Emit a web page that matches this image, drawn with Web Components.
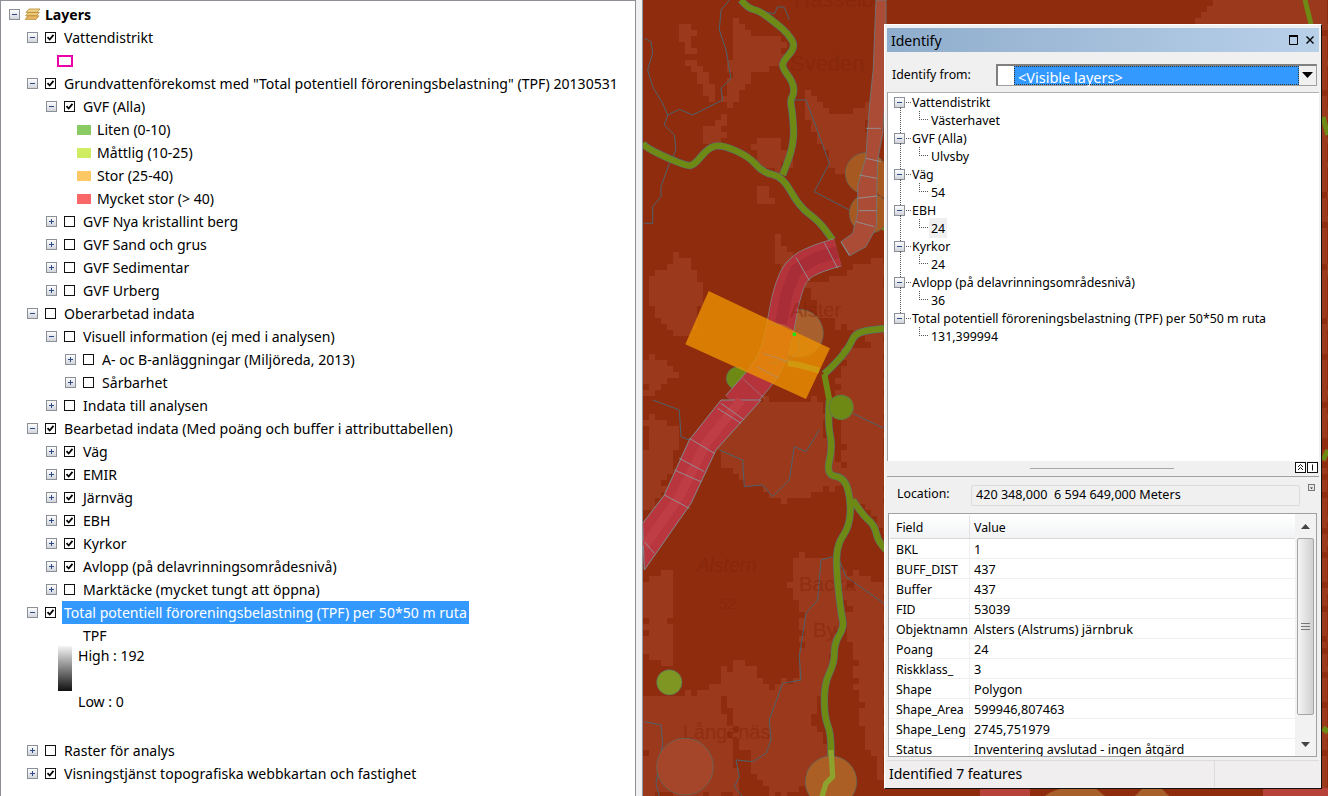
<!DOCTYPE html>
<html>
<head>
<meta charset="utf-8">
<title>Layers</title>
<style>
    html, body { margin: 0; height: 100%; overflow: hidden; background: #f0f0f0; }
    body { display: flex; width: 1328px; height: 796px; font-family: "Noto Sans", "Liberation Sans", sans-serif; color: #000; }
</style>
</head>
<body>
<layers-panel>
    <toc-row level="0" exp="minus" nocheck bold icon>Layers</toc-row>
    <toc-row level="1" exp="minus" check="on">Vattendistrikt</toc-row>
    <toc-legend level="1" kind="outline"></toc-legend>
    <toc-row level="1" exp="minus" check="on">Grundvattenförekomst med "Total potentiell föroreningsbelastning" (TPF) 20130531</toc-row>
    <toc-row level="2" exp="minus" check="on">GVF (Alla)</toc-row>
    <toc-legend level="2" color="#8acb63">Liten (0-10)</toc-legend>
    <toc-legend level="2" color="#d0ec62">Måttlig (10-25)</toc-legend>
    <toc-legend level="2" color="#fdc764">Stor (25-40)</toc-legend>
    <toc-legend level="2" color="#fa6767">Mycket stor (&gt; 40)</toc-legend>
    <toc-row level="2" exp="plus">GVF Nya kristallint berg</toc-row>
    <toc-row level="2" exp="plus">GVF Sand och grus</toc-row>
    <toc-row level="2" exp="plus">GVF Sedimentar</toc-row>
    <toc-row level="2" exp="plus">GVF Urberg</toc-row>
    <toc-row level="1" exp="minus">Oberarbetad indata</toc-row>
    <toc-row level="2" exp="minus">Visuell information (ej med i analysen)</toc-row>
    <toc-row level="3" exp="plus">A- oc B-anläggningar (Miljöreda, 2013)</toc-row>
    <toc-row level="3" exp="plus">Sårbarhet</toc-row>
    <toc-row level="2" exp="plus">Indata till analysen</toc-row>
    <toc-row level="1" exp="minus" check="on">Bearbetad indata (Med poäng och buffer i attributtabellen)</toc-row>
    <toc-row level="2" exp="plus" check="on">Väg</toc-row>
    <toc-row level="2" exp="plus" check="on">EMIR</toc-row>
    <toc-row level="2" exp="plus" check="on">Järnväg</toc-row>
    <toc-row level="2" exp="plus" check="on">EBH</toc-row>
    <toc-row level="2" exp="plus" check="on">Kyrkor</toc-row>
    <toc-row level="2" exp="plus" check="on">Avlopp (på delavrinningsområdesnivå)</toc-row>
    <toc-row level="2" exp="plus">Marktäcke (mycket tungt att öppna)</toc-row>
    <toc-row level="1" exp="minus" check="on" selected>Total potentiell föroreningsbelastning (TPF) per 50*50 m ruta</toc-row>
    <toc-ramp heading="TPF" high="High : 192" low="Low : 0"></toc-ramp>
    <toc-row level="1" exp="plus">Raster för analys</toc-row>
    <toc-row level="1" exp="plus" check="on">Visningstjänst topografiska webbkartan och fastighet</toc-row>
</layers-panel>
<map-view></map-view>
<identify-window>
    <id-node label="Vattendistrikt" value="Västerhavet"></id-node>
    <id-node label="GVF (Alla)" value="Ulvsby"></id-node>
    <id-node label="Väg" value="54"></id-node>
    <id-node label="EBH" value="24" active></id-node>
    <id-node label="Kyrkor" value="24"></id-node>
    <id-node label="Avlopp (på delavrinningsområdesnivå)" value="36"></id-node>
    <id-node label="Total potentiell föroreningsbelastning (TPF) per 50*50 m ruta" value="131,399994" last></id-node>
    <attr-row slot="rows" field="BKL" value="1"></attr-row>
    <attr-row slot="rows" field="BUFF_DIST" value="437"></attr-row>
    <attr-row slot="rows" field="Buffer" value="437"></attr-row>
    <attr-row slot="rows" field="FID" value="53039"></attr-row>
    <attr-row slot="rows" field="Objektnamn" value="Alsters (Alstrums) järnbruk"></attr-row>
    <attr-row slot="rows" field="Poang" value="24"></attr-row>
    <attr-row slot="rows" field="Riskklass_" value="3"></attr-row>
    <attr-row slot="rows" field="Shape" value="Polygon"></attr-row>
    <attr-row slot="rows" field="Shape_Area" value="599946,807463"></attr-row>
    <attr-row slot="rows" field="Shape_Leng" value="2745,751979"></attr-row>
    <attr-row slot="rows" field="Status" value="Inventering avslutad - ingen åtgärd"></attr-row>
</identify-window>

<script>
const treeBox = kind => `
    <svg width="11" height="11" viewBox="0 0 11 11" style="display:block;flex:none">
        <defs><linearGradient id="tb" x1="0" y1="0" x2="0" y2="1"><stop offset="0" stop-color="#fff"/><stop offset="1" stop-color="#cfd3da"/></linearGradient></defs>
        <rect x=".5" y=".5" width="10" height="10" fill="url(#tb)" stroke="#8b9097"/>
        <path d="M3 5.5h5" stroke="#2f4a86" fill="none"/>
        ${kind === 'plus' ? '<path d="M5.5 3v5" stroke="#2f4a86" fill="none"/>' : ''}
    </svg>`;

class TocRow extends HTMLElement {
    constructor() {
        super();
        this.attachShadow({ mode: 'open' });
    }
    connectedCallback() {
        const level = Number(this.getAttribute('level'));
        const exp = this.getAttribute('exp');
        const on = this.getAttribute('check') === 'on';
        const noCheck = this.hasAttribute('nocheck');
        const check = noCheck ? '' : `
            <svg class="chk" width="11" height="11" viewBox="0 0 11 11">
                <rect x=".5" y=".5" width="10" height="10" fill="#fff" stroke="#111"/>
                ${on ? '<path d="M2.5 5.2l2.2 2.3 3.8-4.6" fill="none" stroke="#000" stroke-width="1.8"/>' : ''}
            </svg>`;
        const icon = this.hasAttribute('icon') ? `
            <svg class="ico" width="16" height="14" viewBox="0 0 16 14">
                <path d="M4 1h11l-3 3.4H1z" fill="#f0d488" stroke="#b58a35" stroke-width=".8"/>
                <path d="M3.4 4.4h11l-3 3.4H.6z" fill="#eec777" stroke="#b58a35" stroke-width=".8"/>
                <path d="M3 7.8h11l-3 3.6H.2z" fill="#e7b764" stroke="#b58a35" stroke-width=".8"/>
            </svg>` : '';
        const indent = level === 0 ? 8 : 26 + (level - 1) * 19;
        this.shadowRoot.innerHTML = `
            <style>
                :host { display: flex; align-items: center; height: 23px; font-size: 14.08px; white-space: nowrap; }
                .chk { display: block; flex: none; margin-left: 7px; }
                .ico { display: block; flex: none; margin-left: 5px; }
                .txt { padding: 0 2px; line-height: 23px; margin-left: 6px; }
                :host([bold]) .txt { font-weight: 700; margin-left: 2px; }
                :host([selected]) .txt { background: #3399ff; color: #fff; }
            </style>
            <span style="width:${indent}px;flex:none"></span>
            ${treeBox(exp)}${check}${icon}
            <span class="txt"><slot></slot></span>`;
    }
}

class TocLegend extends HTMLElement {
    constructor() {
        super();
        this.attachShadow({ mode: 'open' });
    }
    connectedCallback() {
        const outline = this.getAttribute('kind') === 'outline';
        const swatch = outline
            ? '<i style="width:12px;height:8px;border:2px solid #ec00a8"></i>'
            : `<i style="width:14px;height:10px;background:${this.getAttribute('color')};margin-right:6px"></i>`;
        this.shadowRoot.innerHTML = `
            <style>
                :host { display: flex; align-items: center; height: 23px; font-size: 14.08px; white-space: nowrap; }
                i { display: block; flex: none; }
            </style>
            <span style="width:${outline ? 56 : 76}px;flex:none"></span>${swatch}<slot></slot>`;
    }
}

class TocRamp extends HTMLElement {
    constructor() {
        super();
        this.attachShadow({ mode: 'open' });
    }
    connectedCallback() {
        this.shadowRoot.innerHTML = `
            <style>
                :host { display: block; font-size: 14.08px; height: 115px; }
                .head { height: 23px; line-height: 23px; padding-left: 82px; }
                .body { display: flex; padding-left: 57px; margin-top: -1px; }
                .grad { width: 14px; height: 45px; background: linear-gradient(#f4f4f4, #111); }
                .lab { display: flex; flex-direction: column; justify-content: space-between; height: 66px; margin: 0 0 0 6px; line-height: 20px; }
            </style>
            <div class="head">${this.getAttribute('heading')}</div>
            <div class="body">
                <div class="grad"></div>
                <div class="lab"><span>${this.getAttribute('high')}</span><span>${this.getAttribute('low')}</span></div>
            </div>`;
    }
}

class LayersPanel extends HTMLElement {
    constructor() {
        super();
        this.attachShadow({ mode: 'open' });
        this.shadowRoot.innerHTML = `
            <style>
                :host { display: block; box-sizing: border-box; flex: none; width: 636px; height: 796px; padding-top: 2px; background: #fff;
                    border: 1px solid #8c9096; border-bottom: 0; margin-right: 6px; overflow: hidden; }
            </style>
            <slot></slot>`;
    }
}

class MapView extends HTMLElement {
    constructor() {
        super();
        this.attachShadow({ mode: 'open' });
        // ljusare markytor, koordinater i pixlar relativt hela sidan
        const a = pts => pts.map((v, i) => i % 2 ? v / 3 : 636 + v / 3);
        const b = pts => pts.map((v, i) => i % 2 ? 400 + v / 3 : 636 + v / 3);
        this.areas = [
            a([130,75,170,75,175,180,235,240,225,310,190,240,140,160]),
            a([290,60,345,100,430,120,455,190,400,215,340,210,330,260,275,330,255,330,285,230]),
            a([205,375,290,340,245,440,205,430]),
            a([500,260,540,300,590,350,640,350,700,300,700,500,640,540,580,500,540,380,500,340]),
            a([350,420,430,420,470,490,400,520,350,480]),
            a([360,550,400,560,400,610,360,600]),
            a([25,880,120,755,170,800,215,870,150,1030,70,960]),
            a([420,710,480,770,430,820,415,760]),
            a([600,830,750,770,750,1030,640,990,560,950,500,860]),
            a([630,1050,750,1020,750,1200,600,1200]),
            a([25,1040,130,1120,25,1200]),
            b([25,50,130,80,130,130,80,280,25,360]),
            b([280,30,400,0,570,0,560,100,640,250,450,300,330,250,240,160]),
            b([600,0,750,0,750,400,700,340,640,300]),
            b([480,470,600,480,640,560,600,720,570,860,520,960,590,1060,450,1188,400,1188,300,1000,250,810,330,780,400,870,440,850,490,820,500,640,460,540]),
            b([25,540,110,500,110,820,60,780,25,750]),
            b([25,880,110,900,250,850,320,1188,25,1188]),
            b([650,500,750,560,750,1188,680,1000,660,800,630,700]),
            [1195,24,1215,0,1322,0,1322,24],
            [1322,0,1328,0,1328,796,1322,796]
        ];
        const inside = (poly, x, y) => {
            let c = false;
            for (let i = 0, j = poly.length - 2; i < poly.length; j = i, i += 2) {
                if ((poly[i + 1] > y) !== (poly[j + 1] > y) &&
                    x < (poly[j] - poly[i]) * (y - poly[i + 1]) / (poly[j + 1] - poly[i + 1]) + poly[i]) c = !c;
            }
            return c;
        };
        const noise = (x, y) => {
            const s = Math.sin(x * 12.9898 + y * 78.233) * 43758.5453;
            return s - Math.floor(s);
        };
        let blocks = '';
        for (let y = 0; y < 796; y += 6) {
            for (let x = 643; x < 1328; x += 6) {
                const jx = x + 3 + (noise(x, y) - .5) * 6;
                const jy = y + 3 + (noise(y, x) - .5) * 6;
                if (this.areas.some(p => inside(p, jx, jy))) blocks += `M${x - 643} ${y}h6v6h-6z`;
            }
        }
        this.shadowRoot.innerHTML = `
            <style>
                :host { display: block; flex: 1; height: 796px; border-left: 1px solid #8c9aa6; background: #8f2c0e; overflow: hidden; }
                svg { display: block; }
                .thin { fill: none; stroke: #4c626c; stroke-width: 3; stroke-linejoin: round; }
                .gEdge { fill: none; stroke: #566f68; stroke-width: 22; stroke-linejoin: round; }
                .g { fill: none; stroke: #6f8a14; stroke-width: 18; stroke-linejoin: round; }
                .rim { fill: none; stroke: #7e8c92; stroke-width: 86; stroke-linejoin: round; }
                .band { fill: none; stroke: #b5343c; stroke-width: 82; stroke-linejoin: round; }
                .cut { fill: none; stroke: #8f9aa0; stroke-width: 2.5; }
                text { font-family: "Liberation Sans", sans-serif; fill: #7f2208; opacity: .45; }
            </style>
            <svg width="685" height="796" viewBox="0 0 685 796">
                <path d="${blocks}" fill="#9b391c" shape-rendering="crispEdges"/>
                <path d="M337 788h50v8h-50zM620 788h65v8h-65z" fill="#b6423a"/>
                <path d="M402 796q10-8 25-8h25l10 8zM492 796l8-8h18l8 8z" fill="#a8602a"/>

                <!-- vy norr, koordinater från skärmens övre del -->
                <g transform="translate(-7 0) scale(.33333)">
                    <text x="475" y="22" font-size="66">Hasselbo</text>
                    <text x="462" y="212" font-size="66">Sveden</text>
                    <polyline class="thin" points="25,115 45,125 50,160 35,210 50,260 80,310 95,345 85,375 115,405 120,450 100,490 75,560 75,590 50,620 50,670 25,670"/>
                    <polyline class="thin" points="95,345 130,328 170,345 260,300 255,265 285,235 270,150 250,90 255,30 280,0"/>
                    <polyline class="thin" points="385,35 415,42 425,20 445,22 460,60"/>
                    <polyline class="thin" points="475,300 510,300 525,340 540,380 580,490 535,575 640,630"/>
                    <polyline class="gEdge" points="315,0 335,25 370,32 420,70 455,100 480,140 440,185 440,205 470,245 475,280 462,300 470,340 475,430 440,525"/>
                    <polyline class="g" points="315,0 335,25 370,32 420,70 455,100 480,140 440,185 440,205 470,245 475,280 462,300 470,340 475,430 440,525"/>
                    <polyline class="gEdge" points="20,430 30,445 150,498 175,495 215,445 255,433 340,470 380,518 440,530 490,620 550,665 590,720"/>
                    <polyline class="g" points="20,430 30,445 150,498 175,495 215,445 255,433 340,470 380,518 440,530 490,620 550,665 590,720"/>
                    <polyline class="gEdge" points="565,1122 600,1090 640,1040 660,995 750,985"/>
                    <polyline class="g" points="565,1122 600,1090 640,1040 660,995 750,985"/>
                    <polyline class="g" points="565,1122 580,1200"/>
                    <polyline class="g" points="720,672 750,685"/>
                    <circle cx="690" cy="520" r="62" fill="#a65a22" stroke="#5b6a60" stroke-width="2"/>
                    <circle cx="700" cy="640" r="60" fill="#a65a22" stroke="#5b6a60" stroke-width="2"/>
                    <circle cx="770" cy="540" r="60" fill="#a65a22"/>
                    <circle cx="305" cy="1135" r="34" fill="#6f8a14" stroke="#566f68" stroke-width="2"/>
                    <circle cx="615" cy="1222" r="38" fill="#6f8a14"/>
                    <circle cx="490" cy="1000" r="72" fill="#a8602e" stroke="#5b6a60" stroke-width="2"/>
                    <polygon points="720,0 715,120 712,205 702,300 695,390 690,470 665,560 665,640 650,700 615,725 640,768 690,740 722,680 722,590 725,480 740,400 750,250 750,0" fill="#ab4c36" stroke="#6b7a7e" stroke-width="2.5"/>
                    <polyline class="rim" points="605,757 540,775 480,810 452,880 435,970 420,1050 385,1120 300,1215"/>
                    <polyline class="band" points="605,757 540,775 480,810 452,880 435,970 420,1050 385,1120 300,1215"/>
                    <polyline points="605,757 540,775 480,810 452,880 435,970" fill="none" stroke="#a92d37" stroke-width="36" stroke-linejoin="round"/>
                    <path class="cut" d="M565 728L605 805M480 772L520 842M690 475L735 485M670 525L722 535M665 595L722 588M668 632L722 632M660 665L715 680M615 725L640 765M690 385L735 385"/>
                    <polygon points="218,873 582,1045 510,1197 148,1033" fill="#eb9103" fill-opacity=".8"/>
                    <path class="cut" d="M382 1060L470 1090M362 1100L430 1135M320 1135L385 1195" stroke-opacity=".6"/>
                    <path d="M402 970q85 5 90 65q-5 50-90 55" fill="none" stroke="#c09030" stroke-width="2"/>
                    <polyline points="455,1090 490,1095 550,1112" fill="none" stroke="#cf9f10" stroke-opacity=".8" stroke-width="18"/>
                    <text x="462" y="950" font-size="60">Alster</text>
                    <rect x="470" y="998" width="10" height="10" fill="#19e619"/>
                </g>

                <!-- södra delen -->
                <g transform="translate(-7 400) scale(.33333)">
                    <polyline class="thin" points="50,0 130,30 135,110 160,120"/>
                    <polyline class="thin" points="250,150 320,180 325,260 380,255 410,290 460,240 475,140 510,155 550,90"/>
                    <polyline class="thin" points="650,40 750,88"/>
                    <polyline class="thin" points="590,470 555,480 545,600 510,640 490,770 495,840 440,850 400,960 405,1020 390,1060 350,1085 300,1080 310,1130 295,1160 320,1190"/>
                    <polyline class="thin" points="25,965 75,975 80,1030 60,1150 70,1190"/>
                    <polyline class="thin" points="610,480 630,530 750,615"/>
                    <text x="182" y="516" font-size="58" font-style="italic">Alstern</text>
                    <text x="250" y="628" font-size="44" font-style="italic">52</text>
                    <text x="488" y="572" font-size="62">Backa</text>
                    <text x="530" y="710" font-size="62">By</text>
                    <text x="140" y="1018" font-size="60">Långenäs</text>
                    <polygon points="255,0 375,0 240,150 165,310 25,510 20,370 85,285 160,120" fill="#b9363f" stroke="#7e8c92" stroke-width="3"/>
                    <polyline points="315,0 210,130 130,290 25,440" fill="none" stroke="#bf3e46" stroke-width="28" stroke-linejoin="round"/>
                    <path class="cut" d="M255 10L325 60M245 25L315 70M160 115L235 160M130 175L205 215M115 210L195 245M85 285L160 325M25 425L55 460"/>
                    <polyline class="gEdge" points="580,0 575,70 590,140 570,225 625,232 645,300 640,380 605,430 600,500 615,640 625,680 595,730 595,790 565,850 565,950 585,1000 585,1100"/>
                    <polyline class="gEdge" points="650,300 680,345 715,375 725,420 750,450"/>
                    <polyline class="g" points="580,0 575,70 590,140 570,225 625,232 645,300 640,380 605,430 600,500 615,640 625,680 595,730 595,790 565,850 565,950 585,1000 585,1100"/>
                    <polyline class="g" points="650,300 680,345 715,375 725,420 750,450"/>
                    <circle cx="615" cy="22" r="36" fill="#6f8a14" stroke="#566f68" stroke-width="2"/>
                    <circle cx="100" cy="847" r="38" fill="#7f9622" stroke="#566f68" stroke-width="2"/>
                    <circle cx="147" cy="1100" r="85" fill="#a5452a" stroke="#566f68" stroke-width="2"/>
                    <circle cx="585" cy="1145" r="77" fill="#ab5f25" stroke="#566f68" stroke-width="2"/>
                    <polyline points="585,1050 590,1130 570,1150 555,1200" fill="none" stroke="#8ea32e" stroke-width="16" stroke-linejoin="round"/>
                </g>

                <!-- kanter runt identify-fönstret -->
                <polyline points="680,117 685,135" fill="none" stroke="#6f8a14" stroke-width="5"/>
                <polyline points="662,0 668,24" fill="none" stroke="#6f8a14" stroke-width="5"/>
                <polyline points="680,460 685,450" fill="none" stroke="#6f8a14" stroke-width="5"/>
                <polyline points="680,728 685,732" fill="none" stroke="#6f8a14" stroke-width="6"/>
            </svg>`;
        // vägarna ska vara mjuka, inte kantiga
        this.shadowRoot.querySelectorAll('polyline.g, polyline.gEdge, polyline.band, polyline.rim').forEach(line => {
            const p = line.getAttribute('points').trim().split(/\s+/).map(s => s.split(',').map(Number));
            let d = `M${p[0]}`;
            for (let i = 1; i < p.length - 1; i++) {
                d += `Q${p[i]} ${(p[i][0] + p[i + 1][0]) / 2},${(p[i][1] + p[i + 1][1]) / 2}`;
            }
            d += `L${p[p.length - 1]}`;
            const path = document.createElementNS('http://www.w3.org/2000/svg', 'path');
            path.setAttribute('class', line.getAttribute('class'));
            path.setAttribute('d', d);
            line.replaceWith(path);
        });
    }
}

class IdNode extends HTMLElement {
    constructor() {
        super();
        this.attachShadow({ mode: 'open' });
    }
    connectedCallback() {
        const active = this.hasAttribute('active');
        this.shadowRoot.innerHTML = `
            <style>
                :host { display: block; position: relative; font-size: 12.38px; white-space: nowrap; }
                .line { display: flex; align-items: center; height: 18px; }
                .h { width: 5px; margin: 0 1px 0 0; border-top: 1px dotted #555; flex: none; }
                .vert { position: absolute; left: 12px; top: 14px; height: 26px; border-left: 1px dotted #555; }
                :host([last]) .vert { display: none; }
                .elbow { width: 9px; height: 9px; margin: -9px 1px 0 31px; flex: none; border-left: 1px dotted #555; border-bottom: 1px dotted #555; box-sizing: border-box; }
                .val { padding: 2px 2px 0; line-height: 18px; }
                .on { background: #f0f0f0; }
            </style>
            <div class="vert"></div>
            <div class="line"><span style="width:6px;flex:none"></span>${treeBox('minus')}<span style="width:1px"></span><i class="h"></i>${this.getAttribute('label')}</div>
            <div class="line"><span class="elbow"></span><span class="val ${active ? 'on' : ''}">${this.getAttribute('value')}</span></div>`;
    }
}

class AttrRow extends HTMLElement {
    constructor() {
        super();
        this.attachShadow({ mode: 'open' });
    }
    connectedCallback() {
        this.shadowRoot.innerHTML = `
            <style>
                :host { display: grid; grid-template-columns: 79px 1fr; height: 20px; box-sizing: border-box; border-bottom: 1px solid #f0f0f0; font-size: 12.3px; white-space: nowrap; line-height: 21px; }
                div { padding-left: 6px; height: 19px; }
                div + div { border-left: 1px solid #f0f0f0; padding-left: 4px; font-size: 12.7px; }
            </style>
            <div>${this.getAttribute('field')}</div><div>${this.getAttribute('value')}</div>`;
    }
}

class IdentifyWindow extends HTMLElement {
    constructor() {
        super();
        this.attachShadow({ mode: 'open' });
        this.shadowRoot.innerHTML = `
            <style>
                :host { position: absolute; left: 884px; top: 24px; width: 438px; height: 765px; box-sizing: border-box; display: flex; flex-direction: column;
                    background: #f0f0f0; border: 1px solid #fff; border-right: 1px solid #111; border-bottom: 1px solid #111; padding: 3px 2px 1px 2px; font-size: 12.3px; white-space: nowrap; }
                .title { flex: none; height: 24px; display: flex; align-items: center; padding: 0 4px; font-size: 14px; background: linear-gradient(90deg, #8fadcc, #b9d0e9); }
                .title span { flex: 1; }
                .title svg { display: block; margin-left: 6px; }
                .from { flex: none; height: 40px; display: flex; align-items: center; box-sizing: border-box; padding: 0 2px 0 5px; }
                .from label { width: 104px; flex: none; margin-top: 4px; }
                .combo { flex: 1; height: 22px; margin-top: 5px; display: flex; box-sizing: border-box; border: 1px solid #a0a0a0; border-top: 2px solid #808080; border-left: 2px solid #808080; background: #fff; }
                .combo .sel { flex: 1; margin-left: 16px; background: #3399ff; color: #fff; outline: 1px dotted #333; outline-offset: -1px; font-size: 14.5px; line-height: 23px; padding-left: 4px; }
                .combo .btn { width: 17px; background: #f0f0f0; display: flex; align-items: center; justify-content: center; }
                .tree { flex: none; height: 369px; box-sizing: border-box; background: #fff; border-top: 1px solid #b0b0b0; border-left: 1px solid #a0a0a0; }
                .split { flex: none; height: 15px; position: relative; display: flex; justify-content: center; align-items: center; border-bottom: 1px solid #a0a0a0; }
                .split hr { width: 144px; margin: 0 0 0 -2px; border: 0; border-top: 1px solid #a8a8a8; }
                .split .mini { position: absolute; right: 1px; top: 1px; display: flex; gap: 1px; }
                .mini svg { display: block; }
                .loc { flex: none; height: 36px; display: flex; align-items: center; box-sizing: border-box; padding-left: 10px; position: relative; }
                .loc label { width: 74px; flex: none; margin-top: -4px; }
                .loc output { display: block; width: 329px; height: 21px; box-sizing: border-box; line-height: 17px; padding-left: 4px; border: 1px solid #dcdcdc; border-radius: 2px; font-size: 12.6px; }
                .loc svg { position: absolute; right: 4px; top: 7px; }
                .grid { flex: none; height: 244px; margin: 0 2px 0 1px; box-sizing: border-box; border: 1px solid #a0a0a0; background: #fff; display: flex; overflow: hidden; }
                .cols { flex: 1; overflow: hidden; padding: 1px 0 0 1px; min-width: 0; }
                .head { display: grid; grid-template-columns: 79px 1fr; height: 24px; line-height: 26px; box-sizing: border-box; background: linear-gradient(#fff, #f1f3f5); border-bottom: 1px solid #d8d8d8; }
                .head div { padding-left: 6px; height: 23px; }
                .head div + div { border-left: 1px solid #e4e4e4; padding-left: 4px; }
                .bar { width: 21px; flex: none; display: flex; flex-direction: column; align-items: center; background: #f2f2f2; position: relative; }
                .thumb { position: absolute; top: 24px; left: 2px; right: 2px; height: 177px; box-sizing: border-box; border: 1px solid #a5a5a5; border-radius: 2px; background: linear-gradient(90deg, #f4f4f4, #d0d0d0); display: flex; align-items: center; justify-content: center; }
                .bar .up { margin-top: 10px; }
                .bar .down { position: absolute; bottom: 9px; left: 6px; }
                .status { flex: 1; display: flex; margin-top: 3px; border-top: 1px solid #dcdcdc; background: #f0eeee; font-size: 14px; line-height: 25px; padding-left: 2px; }
                .status span { width: 325px; border-right: 1px solid #dcdcdc; }
            </style>
            <div class="title"><span>Identify</span>
                <svg width="10" height="10" viewBox="0 0 10 10"><path d="M.5 1.5h8v8h-8z" fill="none" stroke="#000"/><path d="M0 .8h9" stroke="#000" stroke-width="2"/></svg>
                <svg width="10" height="10" viewBox="0 0 10 10"><path d="M1.5 1.5l7 7M8.5 1.5l-7 7" stroke="#000" stroke-width="1.4"/></svg>
            </div>
            <div class="from"><label>Identify from:</label>
                <div class="combo"><div class="sel">&lt;Visible layers&gt;</div>
                    <div class="btn"><svg width="11" height="6"><path d="M0 0h11L5.5 6z"/></svg></div></div>
            </div>
            <div class="tree"><slot></slot></div>
            <div class="split"><hr>
                <div class="mini">
                    <svg width="11" height="11" viewBox="0 0 11 11"><rect x=".5" y=".5" width="10" height="10" fill="#fff" stroke="#111"/><path d="M3 5l2.5-2.5L8 5M3 8l2.5-2.5L8 8" fill="none" stroke="#111"/></svg>
                    <svg width="11" height="11" viewBox="0 0 11 11"><rect x=".5" y=".5" width="10" height="10" fill="#fff" stroke="#111"/><path d="M5.5 2.5v6" stroke="#111"/></svg>
                </div>
            </div>
            <div class="loc"><label>Location:</label><output>420 348,000&nbsp; 6 594 649,000 Meters</output>
                <svg width="7" height="7" viewBox="0 0 7 7"><rect x=".5" y=".5" width="6" height="6" fill="#e8e8e8" stroke="#777"/><path d="M2 3.5h3L3.5 5z" fill="#222"/></svg>
            </div>
            <div class="grid">
                <div class="cols">
                    <div class="head"><div>Field</div><div>Value</div></div>
                    <slot name="rows"></slot>
                </div>
                <div class="bar">
                    <svg class="up" width="9" height="5"><path d="M0 5h9L4.5 0z" fill="#444"/></svg>
                    <div class="thumb"><svg width="9" height="9"><path d="M0 1.5h9M0 4.5h9M0 7.5h9" stroke="#777"/></svg></div>
                    <svg class="down" width="9" height="5"><path d="M0 0h9L4.5 5z" fill="#444"/></svg>
                </div>
            </div>
            <div class="status"><span>Identified 7 features</span></div>`;
    }
}

customElements.define('toc-row', TocRow);
customElements.define('toc-legend', TocLegend);
customElements.define('toc-ramp', TocRamp);
customElements.define('layers-panel', LayersPanel);
customElements.define('map-view', MapView);
customElements.define('id-node', IdNode);
customElements.define('attr-row', AttrRow);
customElements.define('identify-window', IdentifyWindow);
</script>
</body>
</html>
